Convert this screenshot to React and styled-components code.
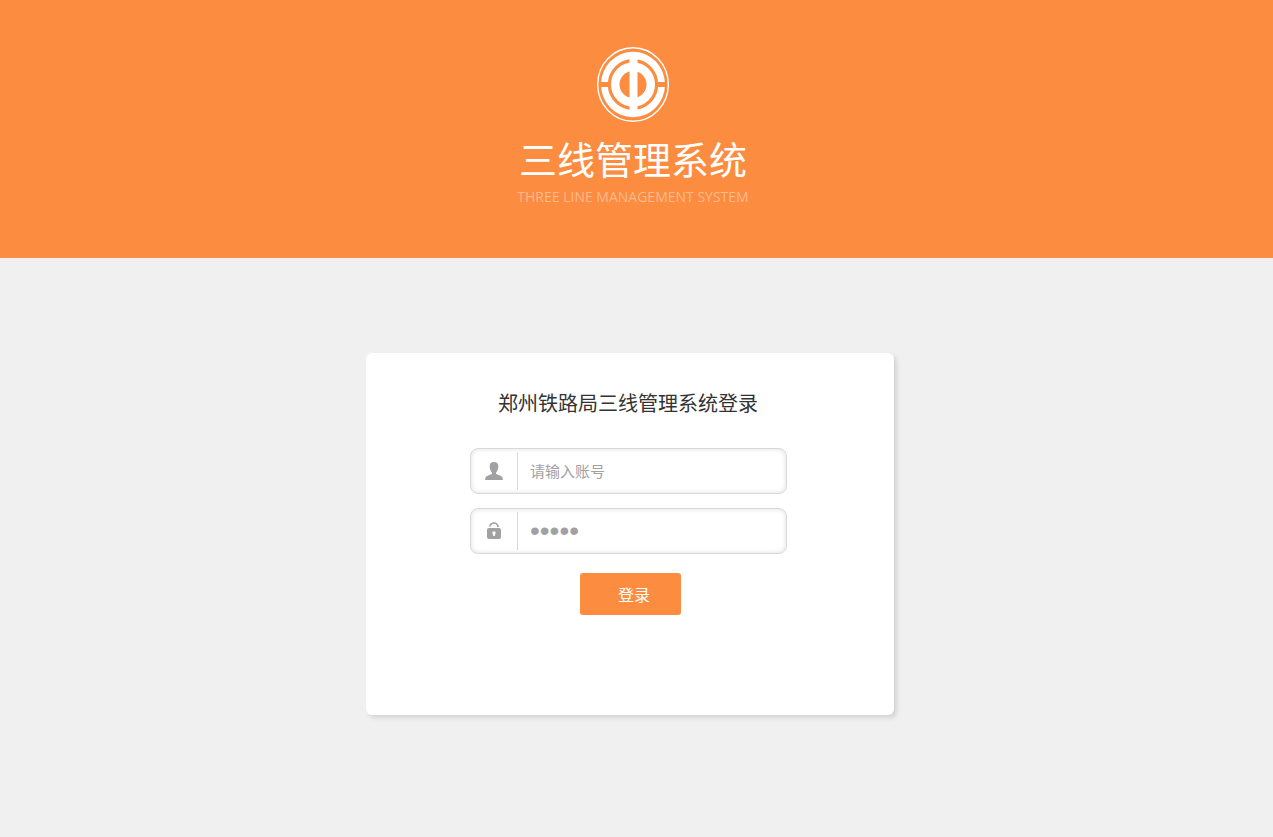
import React, { useState } from 'react';
import styled, { createGlobalStyle } from 'styled-components';

const GlobalStyle = createGlobalStyle`
  body {
    margin: 0;
    background: #f0f0f0;
    font-family: "Open Sans", "Noto Sans CJK SC", sans-serif;
  }
`;

const Header = styled.header`
  display: flex;
  flex-direction: column;
  align-items: center;
  box-sizing: border-box;
  min-height: 258px;
  padding: 47px 7px 0 0;
  background: #fc8c40;
  color: #fff;
`;

const Title = styled.h1`
  margin: 10px 0 0;
  font-size: 38px;
  font-weight: 400;
  line-height: 52px;
`;

const Subtitle = styled.p`
  margin: 2px 0 0;
  font-size: 14px;
  line-height: 20px;
  color: #fdba8c;
`;

const Main = styled.main`
  display: flex;
  justify-content: center;
  padding: 95px 13px 40px 0;
`;

const Card = styled.form`
  display: flex;
  flex-direction: column;
  align-items: center;
  box-sizing: border-box;
  width: 528px;
  padding: 36px 0 100px;
  background: #fff;
  border-radius: 6px;
  box-shadow: 3px 3px 4px #d4d4d4;
`;

const CardTitle = styled.h2`
  margin: 0 4px 29px 0;
  font-size: 20px;
  font-weight: 400;
  line-height: 30px;
  color: #333;
`;

const Field = styled.label`
  display: flex;
  align-items: stretch;
  box-sizing: border-box;
  width: 317px;
  height: 46px;
  margin: 0 3px 14px 0;
  padding: 3px 0;
  border: 1px solid #d9d9d9;
  border-radius: 8px;
  box-shadow: inset 0 0 5px #ddd;
`;

const FieldIcon = styled.span`
  display: flex;
  align-items: center;
  justify-content: center;
  width: 46px;
  border-right: 1px solid #d9d9d9;
`;

const Input = styled.input`
  flex: 1;
  min-width: 0;
  padding: 0 12px;
  border: 0;
  outline: 0;
  background: transparent;
  font-family: inherit;
  font-size: 15px;
  color: #a1a1a4;

  &::placeholder {
    color: #a1a1a4;
    opacity: 1;
  }
`;

const PasswordInput = styled(Input)`
  font-family: "Liberation Sans", sans-serif;
  font-size: 28px;
`;

const Button = styled.button`
  width: 101px;
  height: 42px;
  margin-top: 5px;
  padding: 0 0 0 8px;
  border: 0;
  border-radius: 3px;
  background: #fc8c40;
  color: #fff;
  font-family: inherit;
  font-size: 16px;
  cursor: pointer;
`;

const Logo = () => (
  <svg width="72" height="76" viewBox="0 0 72 76" fill="none">
    <ellipse cx="36" cy="37.5" rx="35.3" ry="36.8" stroke="#fff" strokeWidth="1.4" />
    <ellipse cx="36" cy="37.5" rx="32" ry="32.8" fill="#fff" />
    <ellipse cx="36" cy="37.5" rx="23.6" ry="23.8" stroke="#fc8c40" strokeWidth="3.2" />
    <ellipse cx="36" cy="37.5" rx="13.5" ry="13.5" fill="#fc8c40" />
    <path d="M3 37.500h9M60 37.500h9" stroke="#fc8c40" strokeWidth="5" />
    <path d="M36.500 8v59" stroke="#fff" strokeWidth="8" />
  </svg>
);

const UserIcon = () => (
  <svg width="18" height="18" viewBox="0 0 18 18" fill="#a1a1a4">
    <path d="M9 0C6 0 4.700 1.500 4.800 4L4.600 5.500 5.300 7.500C5.600 9 6.300 9.800 6.900 10.400V12L2 14Q0 14.800 0 18H18Q18 14.800 16 14L11.100 12V10.400C11.700 9.800 12.400 9 12.700 7.500L13.400 5.500 13.200 4C13.300 1.500 12 0 9 0Z" />
  </svg>
);

const LockIcon = () => (
  <svg width="14" height="18" viewBox="0 0 14 18">
    <path d="M2.800 4.500C3.500 2 5 1 7 1S10.500 2 11.200 5" fill="none" stroke="#a1a1a4" strokeWidth="1.700" />
    <rect y="6" width="14" height="11" rx="2" fill="#a1a1a4" />
    <path d="M5.500 9.500h3v2l-.8 2.500H6.300l-.8-2.500z" fill="#fff" />
  </svg>
);

const App = () => {
  const [account, setAccount] = useState('');
  const [password, setPassword] = useState('admin');

  return (
    <>
      <GlobalStyle />
      <Header>
        <Logo />
        <Title>三线管理系统</Title>
        <Subtitle>THREE LINE MANAGEMENT SYSTEM</Subtitle>
      </Header>
      <Main>
        <Card onSubmit={(e) => e.preventDefault()}>
          <CardTitle>郑州铁路局三线管理系统登录</CardTitle>
          <Field>
            <FieldIcon><UserIcon /></FieldIcon>
            <Input
              type="text"
              aria-label="账号"
              placeholder="请输入账号"
              value={account}
              onChange={(e) => setAccount(e.target.value)}
            />
          </Field>
          <Field>
            <FieldIcon><LockIcon /></FieldIcon>
            <PasswordInput
              type="password"
              aria-label="密码"
              value={password}
              onChange={(e) => setPassword(e.target.value)}
            />
          </Field>
          <Button type="submit">登录</Button>
        </Card>
      </Main>
    </>
  );
};

export default App;
